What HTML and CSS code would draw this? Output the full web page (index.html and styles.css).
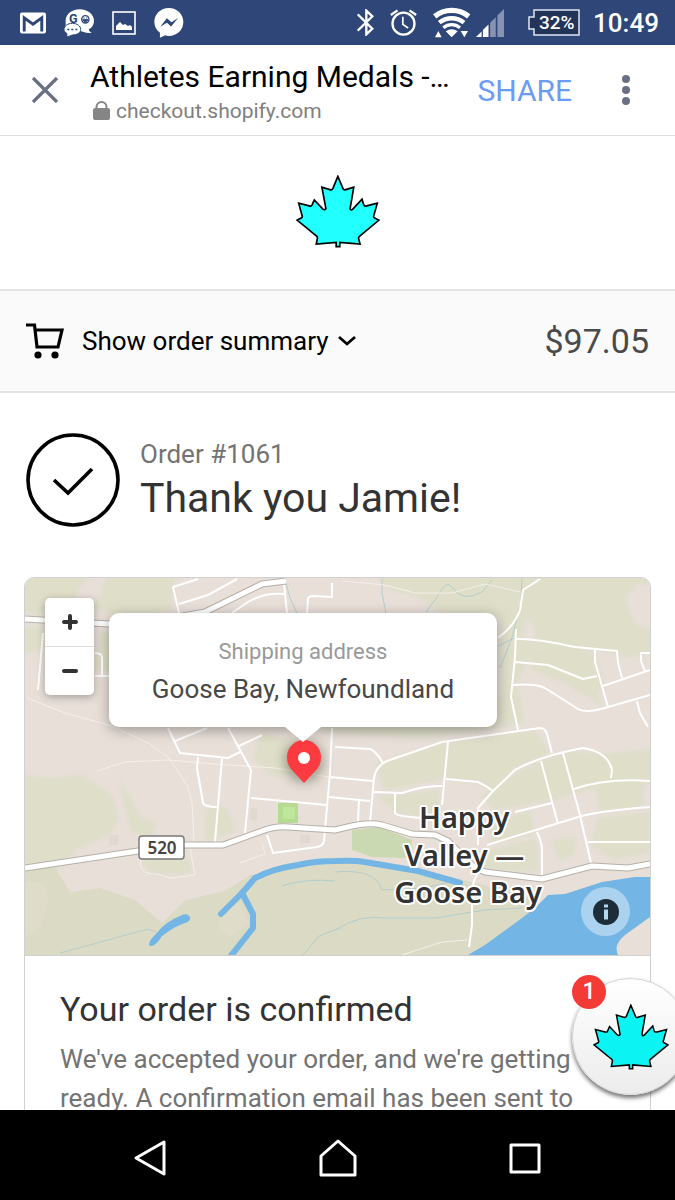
FILE: index.html
```html
<!DOCTYPE html>
<html lang="en">
<head>
    <meta charset="UTF-8">
    <meta name="viewport" content="width=device-width, initial-scale=1.0">
    <title>Athletes Earning Medals - Thank you</title>
    <link rel="stylesheet" href="styles.css">
</head>
<body>

<svg class="defs" aria-hidden="true">
    <symbol id="leaf" viewBox="46 31 253 220">
        <path d="M172 35L157 72Q154 77 148 75L124 68L136 132Q133 138 127 134L101 106L94 122Q92 126 86 124L54 116L65 156Q65 160 61 161L49 167L108 215Q112 219 110 224L107 239L167 234V247H178V234L239 239L235 224Q233 219 238 215L296 167L284 161Q279 159 280 155L291 116L259 124Q252 126 250 121L245 104L217 134Q211 140 209 132L220 68L196 75Q190 77 188 73Z" stroke="#000" stroke-width="5"/>
    </symbol>
</svg>

<div class="status-bar">
    <div class="status-left">
        <svg width="26" height="22" viewBox="61 36 80 64">
            <rect x="61" y="36" width="80" height="64" rx="6" fill="#fff"/>
            <path d="M74 94V52L101 72L128 52V94" fill="none" stroke="#2e4678" stroke-width="9"/>
        </svg>
        <svg width="30" height="28" viewBox="191 26 90 84">
            <path d="M238 27C262 27 281 42 281 61C281 73 275 82 265 87Q266 93 274 98Q258 99 248 94L196 80V61C196 42 214 27 238 27Z" fill="#fff"/>
            <text x="206" y="69" class="go-text">G</text>
            <circle cx="255" cy="57" r="11" fill="none" stroke="#2e4678" stroke-width="4"/>
            <path d="M247 58H263Q255 71 247 58M249 53H253M257 53H261" fill="#2e4678" stroke="#2e4678" stroke-width="3"/>
            <path d="M216 69C230 69 241 77 241 87C241 98 230 104 216 104Q206 110 197 108Q201 104 200 100C194 96 191 92 191 87C191 77 202 69 216 69Z" fill="#fff" stroke="#2e4678" stroke-width="3"/>
            <path d="M201 85h6v5h-6zM213 85h6v5h-6zM225 85h6v5h-6z" fill="#2e4678"/>
        </svg>
        <svg width="24" height="24" viewBox="0 0 24 24">
            <rect x="1" y="1" width="22" height="22" fill="none" stroke="#fff" stroke-width="1.6"/>
            <path d="M4 19V15L8 11L11 14L13 13L16 15L18 14L20 16V19Z" fill="#fff"/>
        </svg>
        <svg width="30" height="30" viewBox="461 24 89 91">
            <path d="M505 24C530 24 549 43 549 66C549 91 530 109 505 109Q499 109 494 107L478 114V99C467 91 461 80 461 66C461 43 480 24 505 24Z" fill="#fff"/>
            <path d="M479 81L499 55L513 67L533 54L512 80L499 69Z" fill="#2e4678"/>
        </svg>
    </div>
    <div class="status-right">
        <svg width="17" height="27" viewBox="68 28 51 81">
            <path d="M70 44L114 87L96 104V33L114 50L70 93" fill="none" stroke="#fff" stroke-width="7"/>
        </svg>
        <svg width="27" height="27" viewBox="165 28 80 81">
            <circle cx="205" cy="72" r="33" fill="none" stroke="#fff" stroke-width="7"/>
            <path d="M167 46L187 32M223 32L243 46" stroke="#fff" stroke-width="7"/>
            <path d="M203 51V74L219 85" fill="none" stroke="#fff" stroke-width="5"/>
        </svg>
        <svg width="37" height="31" viewBox="294 26 111 93">
            <g fill="none" stroke="#fff">
                <path d="M299 54A81 81 0 0 1 401 54" stroke-width="16"/>
                <path d="M313 73A58 58 0 0 1 387 73" stroke-width="13"/>
                <path d="M325 88A39 39 0 0 1 375 88" stroke-width="10"/>
            </g>
            <path d="M332 99Q350 86 368 99L350 117ZM300 117L310 98L320 117ZM377 98H399L388 117Z" fill="#fff"/>
        </svg>
        <svg class="signal" width="28" height="28" viewBox="422 28 85 85">
            <path d="M422 113L439 96V113ZM443 92L460 75V113H443Z" fill="#fff"/>
            <path d="M465 70L482 53V113H465ZM487 48L507 28V113H487Z" fill="#8793b3"/>
        </svg>
        <svg class="battery" width="52" height="27" viewBox="0 0 52 27">
            <path d="M6 1H51V26H6V20H1V8H6Z" fill="#223458" stroke="#dfe5f2" stroke-width="1.5"/>
            <text x="11" y="20" class="battery-text">32%</text>
        </svg>
        <span class="clock">10:49</span>
    </div>
</div>

<header class="browser-bar">
    <button class="icon-btn close" aria-label="Close">
        <svg width="28" height="28" viewBox="0 0 28 28"><path d="M2 2L26 26M26 2L2 26" stroke="#697083" stroke-width="3.2"/></svg>
    </button>
    <div class="page-info">
        <div class="page-title">Athletes Earning Medals -…</div>
        <div class="page-url">
            <svg width="17" height="20" viewBox="0 0 17 20">
                <rect x="0" y="7" width="17" height="12" rx="2" fill="#858585"/>
                <path d="M3.5 8V6a5 5 0 0 1 10 0V8" fill="none" stroke="#858585" stroke-width="2"/>
            </svg>
            checkout.shopify.com
        </div>
    </div>
    <button class="share">SHARE</button>
    <button class="icon-btn more" aria-label="More options">
        <svg width="8" height="30" viewBox="0 0 8 30" fill="#697083"><circle cx="4" cy="4" r="4"/><circle cx="4" cy="15" r="4"/><circle cx="4" cy="26" r="4"/></svg>
    </button>
</header>

<main class="page">
    <div class="shop-logo">
        <svg width="84" height="73" fill="#22ffff"><use href="#leaf"/></svg>
    </div>

    <div class="order-summary">
        <button class="summary-toggle">
            <svg width="38" height="36" viewBox="0 0 38 36">
                <path d="M0 2H8.500L11 24H32L36 7H9" fill="none" stroke="#000" stroke-width="3.200"/>
                <circle cx="12" cy="32" r="3.600"/><circle cx="29" cy="32" r="3.600"/>
            </svg>
            <span>Show order summary</span>
            <svg class="chevron" width="18" height="12" viewBox="0 0 18 12"><path d="M1 2L9 9L17 2" fill="none" stroke="#000" stroke-width="2.800"/></svg>
        </button>
        <span class="total">$97.05</span>
    </div>

    <div class="thank-you">
        <svg width="94" height="94" viewBox="0 0 94 94" fill="none" stroke="#000">
            <circle cx="47" cy="47" r="45" stroke-width="3.600"/>
            <path d="M28 47L42 60L66 36" stroke-width="3.600"/>
        </svg>
        <div>
            <div class="order-number">Order #1061</div>
            <h1>Thank you Jamie!</h1>
        </div>
    </div>

    <section class="card">
        <div class="map">
            <svg class="map-art" viewBox="0 0 625 377" preserveAspectRatio="xMidYMid slice">
                <defs>
                    <filter id="soft"><feGaussianBlur stdDeviation="2"/></filter>
                    <filter id="shade" x="-50%" y="-50%" width="200%" height="200%"><feGaussianBlur stdDeviation="6"/></filter>
                </defs>
                <rect width="625" height="377" fill="#e8dfd9"/>

                <!-- woods and fields -->
                <g fill="#dedec9" filter="url(#soft)">
                    <path d="M-5 -5H150L146 32L100 40L60 28L28 36L-5 36Z"/>
                    <path d="M-5 48L35 50L18 70L-5 78ZM75 52L115 70L110 100L70 90Z"/>
                    <path d="M-5 197L25 200L58 197L88 218L94 240L84 257L50 272L36 290L-5 292Z"/>
                    <path d="M93 200L103 215L115 238L133 246L126 260L106 254Z"/>
                    <path d="M121 275L160 272L168 295L130 297L118 287Z"/>
                    <path d="M180 230L200 228L212 252L180 264Z"/>
                    <path d="M348 -5H630V75L600 80L575 72L540 75L510 68L492 105L500 145L400 160L300 154L300 120H475V40L415 35L395 20L365 12Z"/>
                    <path d="M235 155L275 165L280 190L250 200L228 182Z"/>
                    <path d="M350 185L420 164L510 152L525 175L490 190L468 210L420 200L360 213Z"/>
                    <path d="M352 218L415 212L413 242L373 236Z"/>
                    <path d="M505 70L570 76L580 110L572 115L578 128L540 106L507 92Z"/>
                    <path d="M500 190L540 173L580 176L630 170V205L570 210L530 222L470 232L455 218Z"/>
                    <path d="M570 210L618 205V228L575 235ZM462 247L505 232L510 255L465 266ZM525 262L550 258V275L535 284Z"/>
                    <path d="M572 240L625 234V275L590 282L566 268ZM460 273L512 260L513 294L460 292Z"/>
                </g>
                <g fill="#e8dfd9" filter="url(#soft)">
                    <path d="M502 40L512 52L508 65L498 60ZM600 20L612 6H630V52L610 46Z"/>
                    <path d="M62 0L82 -3L75 20L55 28L50 18Z"/>
                </g>
                <path d="M0 290L30 289L45 314L75 310L110 322L137 345L160 322L200 313L225 297L310 280L400 292L450 305L500 318L515 330L450 377H0Z" fill="#dadac5"/>
                <path d="M0 305Q25 300 23 325L15 350L0 360ZM200 330L215 325L224 345L205 359L192 350Z" fill="#dfddca"/>
                <path d="M327 252L355 249L387 262L385 280L347 279L327 272Z" fill="#cad9b2"/>
                <rect x="253" y="225" width="20" height="20" fill="#b5da92"/>
                <rect x="258" y="229" width="12" height="12" fill="#bfe79c"/>
                <path d="M225 230h7v12h-7zM84 257h9v10h-9zM275 257h10v8h-10z" fill="#dfd9cf"/>

                <!-- streams -->
                <g class="stream">
                    <path d="M261 5L265 20L272 35M357 1V15L361 35M401 34L412 19Q421 0 428 10Q438 25 457 14L467 2M497 0L496 25L487 60L475 90M473 68L489 60"/>
                    <path d="M35 375L83 362L123 351L133 355M278 377L294 358L315 350M310 352Q335 336 360 340L410 340L460 332L497 330M310 294Q350 290 357 312L400 310L425 304M257 308Q280 300 310 303"/>
                </g>

                <!-- river and lake -->
                <g class="river">
                    <path d="M196 336L217 315L230 300Q250 290 273 287Q290 283 310 283Q330 282 340 284L393 293L435 305"/>
                    <path d="M217 315L228 336V350L205 379"/>
                </g>
                <path d="M165 339Q162 334 155 338Q140 344 132 355Q124 362 124 367Q129 371 137 358Q150 348 160 345Q166 343 165 339Z" fill="#73b5e4"/>
                <path d="M523 317L540 316L577 304L610 299H625V339L600 357Q588 367 593 377H443L460 367L497 340L510 330Z" fill="#73b5e4"/>

                <!-- tracks -->
                <g class="track">
                    <path d="M2 120L40 135L87 148L123 165L143 179L162 207L167 224L169 264M72 193L100 184L143 182L190 186L250 190L310 200M318 3L360 7L390 15L427 15L460 6L495 14"/>
                    <path d="M116 273L115 287Q118 297 132 296L145 300L170 297L165 270M215 285L240 276L237 265M377 377L417 364L443 362"/>
                </g>

                <!-- streets -->
                <g class="street">
                    <path d="M173 1L148 9L154 35M154 26L183 17L212 1M207 35L223 24Q240 14 259 16M259 5L262 35M282 35L283 21Q283 18 288 18L307 19V5"/>
                    <path d="M18 55L13 112M70 75Q77 75 77 80V98M70 98H84M143 150L155 175L203 180L215 174M150 163L182 150M203 150L226 192M212 169L237 157M173 179L172 190L178 225Q180 229 192 229M197 180L190 264"/>
                    <path d="M226 192L220 255M226 220L302 227M307 150L305 195L299 263Q298 268 292 269L248 275L242 257M305 199L348 203M304 219L345 223M334 222L333 244"/>
                    <path d="M515 1L498 12L495 32Q490 47 473 60M491 51L490 79L486 119L493 152M491 61Q510 60 550 69L592 73L593 85L597 100M490 84L523 87L558 101L572 98M487 107Q510 105 520 110L553 131Q562 136 583 129L625 117"/>
                    <path d="M570 72V84L583 129M578 108L625 92M620 93L616 83V75H625M612 123L615 135L623 149M310 169L345 171Q350 172 358 185M345 244L349 200Q351 188 362 183L417 164L515 150Q520 150 522 156L527 175"/>
                    <path d="M423 164L417 227M453 267V230L468 213L490 192Q515 178 558 170Q583 174 587 192L586 200M516 183L533 246M538 175L555 237L566 285M349 214L377 215Q400 207 417 208M370 215V235Q370 238 397 240M421 201L453 204Q460 207 468 213"/>
                    <path d="M490 234L527 225M462 267L550 240Q570 233 625 229M549 211Q580 200 625 203M563 264H625M512 254Q518 267 517 275V300M452 297Q447 303 447 320V347L444 369"/>
                </g>

                <!-- main roads -->
                <path class="road-case" d="M0 41L84 46L130 43L180 34L237 6L261 3"/>
                <path class="road" d="M0 41L84 46L130 43L180 34L237 6L261 3"/>
                <path class="road-case" d="M0 290L113 273L160 267H198L237 253Q250 248 263 249L310 252L327 248Q345 244 357 247L387 256L410 257L423 263L450 290L460 294L517 301L567 288L603 290L625 286"/>
                <path class="road" d="M0 290L113 273L160 267H198L237 253Q250 248 263 249L310 252L327 248Q345 244 357 247L387 256L410 257L423 263L450 290L460 294L517 301L567 288L603 290L625 286"/>

                <rect x="114" y="258" width="45" height="23" rx="3" fill="#fff" stroke="#777" stroke-width="1.4"/>
                <text x="137" y="276" class="road-number">520</text>
                <text class="town">
                    <tspan x="443" y="250">Happy</tspan>
                    <tspan x="443" y="288">Valley —</tspan>
                    <tspan x="443" y="325">Goose Bay</tspan>
                </text>

                <!-- marker -->
                <ellipse cx="279" cy="183" rx="19" ry="21" fill="#4b4b35" opacity=".5" filter="url(#shade)"/>
                <path d="M279 205L266 191Q262 186 262 179A17 17 0 0 1 296 179Q296 186 292 191Z" fill="#fb3b3f"/>
                <circle cx="279" cy="180" r="6" fill="#fff"/>
            </svg>

            <div class="zoom">
                <button aria-label="Zoom in"><svg width="16" height="16" viewBox="0 0 16 16"><path d="M2 8H14M8 2V14" stroke="#333" stroke-width="4" stroke-linecap="round"/></svg></button>
                <button aria-label="Zoom out"><svg width="16" height="16" viewBox="0 0 16 16"><path d="M2 8H14" stroke="#333" stroke-width="4" stroke-linecap="round"/></svg></button>
            </div>

            <div class="popup">
                <div class="popup-label">Shipping address</div>
                <div class="popup-place">Goose Bay, Newfoundland</div>
            </div>

            <button class="map-info" aria-label="Map information">
                <svg width="26" height="26" viewBox="0 0 26 26"><circle cx="13" cy="13" r="13" fill="#1c2c38"/><path d="M11 5.500h4v3h-4zM11 10.500h4v10h-4z" fill="#b3d7f1"/></svg>
            </button>
        </div>
        <div class="card-body">
            <h2>Your order is confirmed</h2>
            <p>We've accepted your order, and we're getting ready. A confirmation email has been sent to</p>
        </div>
    </section>

    <button class="chat-head" aria-label="Open chat, 1 new message">
        <svg width="76" height="66" fill="#0cf3f3"><use href="#leaf"/></svg>
        <span class="badge">1</span>
    </button>
</main>

<nav class="nav-bar">
    <button aria-label="Back"><svg width="38" height="38" viewBox="0 0 38 38"><path d="M33 3V35L5 19Z"/></svg></button>
    <button aria-label="Home"><svg width="38" height="38" viewBox="0 0 38 38"><path d="M19 2L36 17V36H2V17Z"/></svg></button>
    <button aria-label="Recent apps"><svg width="38" height="38" viewBox="0 0 38 38"><rect x="5" y="6" width="28" height="27"/></svg></button>
</nav>

</body>
</html>
```
FILE: styles.css
```css
* {
    box-sizing: border-box;
}

body {
    margin: 0;
    height: 100vh;
    display: flex;
    flex-direction: column;
    overflow: hidden;
    background-color: #fff;
    color: #333;
    font-family: Roboto, "Liberation Sans", sans-serif;
}

svg {
    display: block;
    flex-shrink: 0;
}

button {
    display: flex;
    align-items: center;
    justify-content: center;
    padding: 0;
    border: none;
    background: none;
    color: inherit;
    font-family: inherit;
    cursor: pointer;
}

h1, h2, p {
    margin: 0;
    font-weight: 400;
}

.defs {
    position: absolute;
    width: 0;
    height: 0;
}

/* phone status bar */
.status-bar {
    display: flex;
    justify-content: space-between;
    flex-shrink: 0;
    height: 45px;
    padding: 0 16px 0 20px;
    background-color: #2e4678;
    color: #fff;
}

.status-left, .status-right {
    display: flex;
    align-items: center;
    gap: 18px;
}

.status-right {
    gap: 16px;
}

.signal {
    margin-left: -10px;
}

.battery {
    margin-left: 8px;
    margin-right: -3px;
}

.battery-text {
    font-size: 19px;
    font-weight: 500;
    fill: #fff;
}

.go-text {
    font-size: 38px;
    font-weight: 700;
    fill: #2e4678;
}

.clock {
    font-size: 26px;
    font-weight: 500;
}

/* browser bar */
.browser-bar {
    display: flex;
    align-items: center;
    flex-shrink: 0;
    height: 91px;
    padding: 0 20px 0 31px;
    border-bottom: 1px solid #ddd;
}

.page-info {
    flex: 1;
    min-width: 0;
    margin-left: 31px;
    padding-top: 6px;
}

.page-title {
    overflow: hidden;
    color: #000;
    font-size: 30px;
    line-height: 36px;
    white-space: nowrap;
}

.page-url {
    display: flex;
    align-items: center;
    gap: 6px;
    padding-left: 3px;
    color: #808080;
    font-size: 21px;
    line-height: 32px;
}

.share {
    color: #6c9bf5;
    font-size: 30px;
}

.more {
    width: 58px;
    margin-left: 25px;
}

/* checkout page */
.page {
    position: relative;
    flex: 1;
    min-height: 0;
    overflow: hidden;
}

.shop-logo {
    display: flex;
    justify-content: center;
    padding: 39px 0 41px;
}

.order-summary {
    display: flex;
    align-items: center;
    justify-content: space-between;
    height: 104px;
    padding: 0 26px;
    border-top: 2px solid #e3e3e3;
    border-bottom: 2px solid #e3e3e3;
    background-color: #fafafa;
}

.summary-toggle {
    color: #000;
    font-size: 26px;
    gap: 18px;
}

.chevron {
    margin-left: -9px;
}

.total {
    color: #4a4a4a;
    font-size: 34px;
}

.thank-you {
    display: flex;
    align-items: center;
    gap: 20px;
    padding: 40px 26px 50px;
}

.order-number {
    color: #737373;
    font-size: 26px;
    line-height: 36px;
}

h1 {
    font-size: 41px;
    line-height: 52px;
}

.card {
    margin: 0 24px;
    border: 1px solid #d0d0d0;
    border-radius: 10px;
    overflow: hidden;
}

.map {
    position: relative;
    height: 378px;
    border-bottom: 1px solid #d0d0d0;
}

.map-art {
    width: 100%;
    height: 100%;
}

.stream {
    fill: none;
    stroke: #b5cdc9;
    stroke-width: 1;
}

.river {
    fill: none;
    stroke: #73b5e4;
    stroke-width: 6;
    stroke-linecap: round;
    stroke-linejoin: round;
}

.track {
    fill: none;
    stroke: #f5efe9;
    stroke-width: 1;
}

.street {
    fill: none;
    stroke: #fff;
    stroke-width: 2;
    stroke-linejoin: round;
}

.road-case, .road {
    fill: none;
    stroke: #b5b0a9;
    stroke-width: 7;
    stroke-linejoin: round;
}

.road {
    stroke: #fff;
    stroke-width: 5;
}

.road-number {
    font-family: "Noto Sans", sans-serif;
    font-size: 17px;
    font-weight: 600;
    fill: #444;
    text-anchor: middle;
}

.town {
    font-family: "Noto Sans", sans-serif;
    font-size: 29px;
    font-weight: 600;
    fill: #333;
    stroke: #fff;
    stroke-width: 4;
    stroke-linejoin: round;
    paint-order: stroke;
    text-anchor: middle;
}

.zoom {
    position: absolute;
    top: 20px;
    left: 20px;
    width: 49px;
    border-radius: 5px;
    background-color: #fff;
    box-shadow: 0 2px 8px rgba(0, 0, 0, 0.3);
}

.zoom button {
    width: 100%;
    height: 48px;
}

.zoom button + button {
    height: 49px;
    border-top: 1px solid #ddd;
}

.popup {
    position: absolute;
    top: 35px;
    left: 84px;
    width: 388px;
    padding: 20px 0 19px;
    border-radius: 10px;
    background-color: #fff;
    box-shadow: 0 3px 14px rgba(0, 0, 0, 0.35);
    text-align: center;
}

.popup::after {
    content: "";
    position: absolute;
    top: 100%;
    left: 50%;
    margin-left: -18px;
    border: 18px solid transparent;
    border-top: 15px solid #fff;
    border-bottom: none;
}

.popup-label {
    color: #999;
    font-size: 22px;
    line-height: 37px;
}

.popup-place {
    color: #484848;
    font-size: 26px;
    line-height: 38px;
}

.map-info {
    position: absolute;
    right: 20px;
    bottom: 19px;
    width: 49px;
    height: 49px;
    border-radius: 50%;
    background-color: rgba(255, 255, 255, 0.4);
}

.card-body {
    padding: 31px 35px;
}

h2 {
    font-size: 34px;
    line-height: 44px;
}

.card-body p {
    margin-top: 9px;
    color: #737373;
    font-size: 26px;
    line-height: 39px;
}

/* floating chat button */
.chat-head {
    position: absolute;
    right: -14px;
    bottom: 15px;
    width: 117px;
    height: 117px;
    border: 1px solid #d4d4d4;
    border-radius: 50%;
    background: linear-gradient(#fff, #ececec);
    box-shadow: 0 3px 4px rgba(0, 0, 0, 0.55);
}

.badge {
    position: absolute;
    top: -4px;
    left: -1px;
    width: 34px;
    height: 34px;
    border-radius: 50%;
    background-color: #f43a34;
    color: #fff;
    font-size: 23px;
    font-weight: 500;
    line-height: 34px;
}

/* phone navigation */
.nav-bar {
    display: flex;
    flex-shrink: 0;
    height: 90px;
    padding: 5px 56px 0;
    background-color: #000;
}

.nav-bar button {
    flex: 1;
}

.nav-bar svg {
    fill: none;
    stroke: #fff;
    stroke-width: 3;
    stroke-linejoin: round;
}
```
